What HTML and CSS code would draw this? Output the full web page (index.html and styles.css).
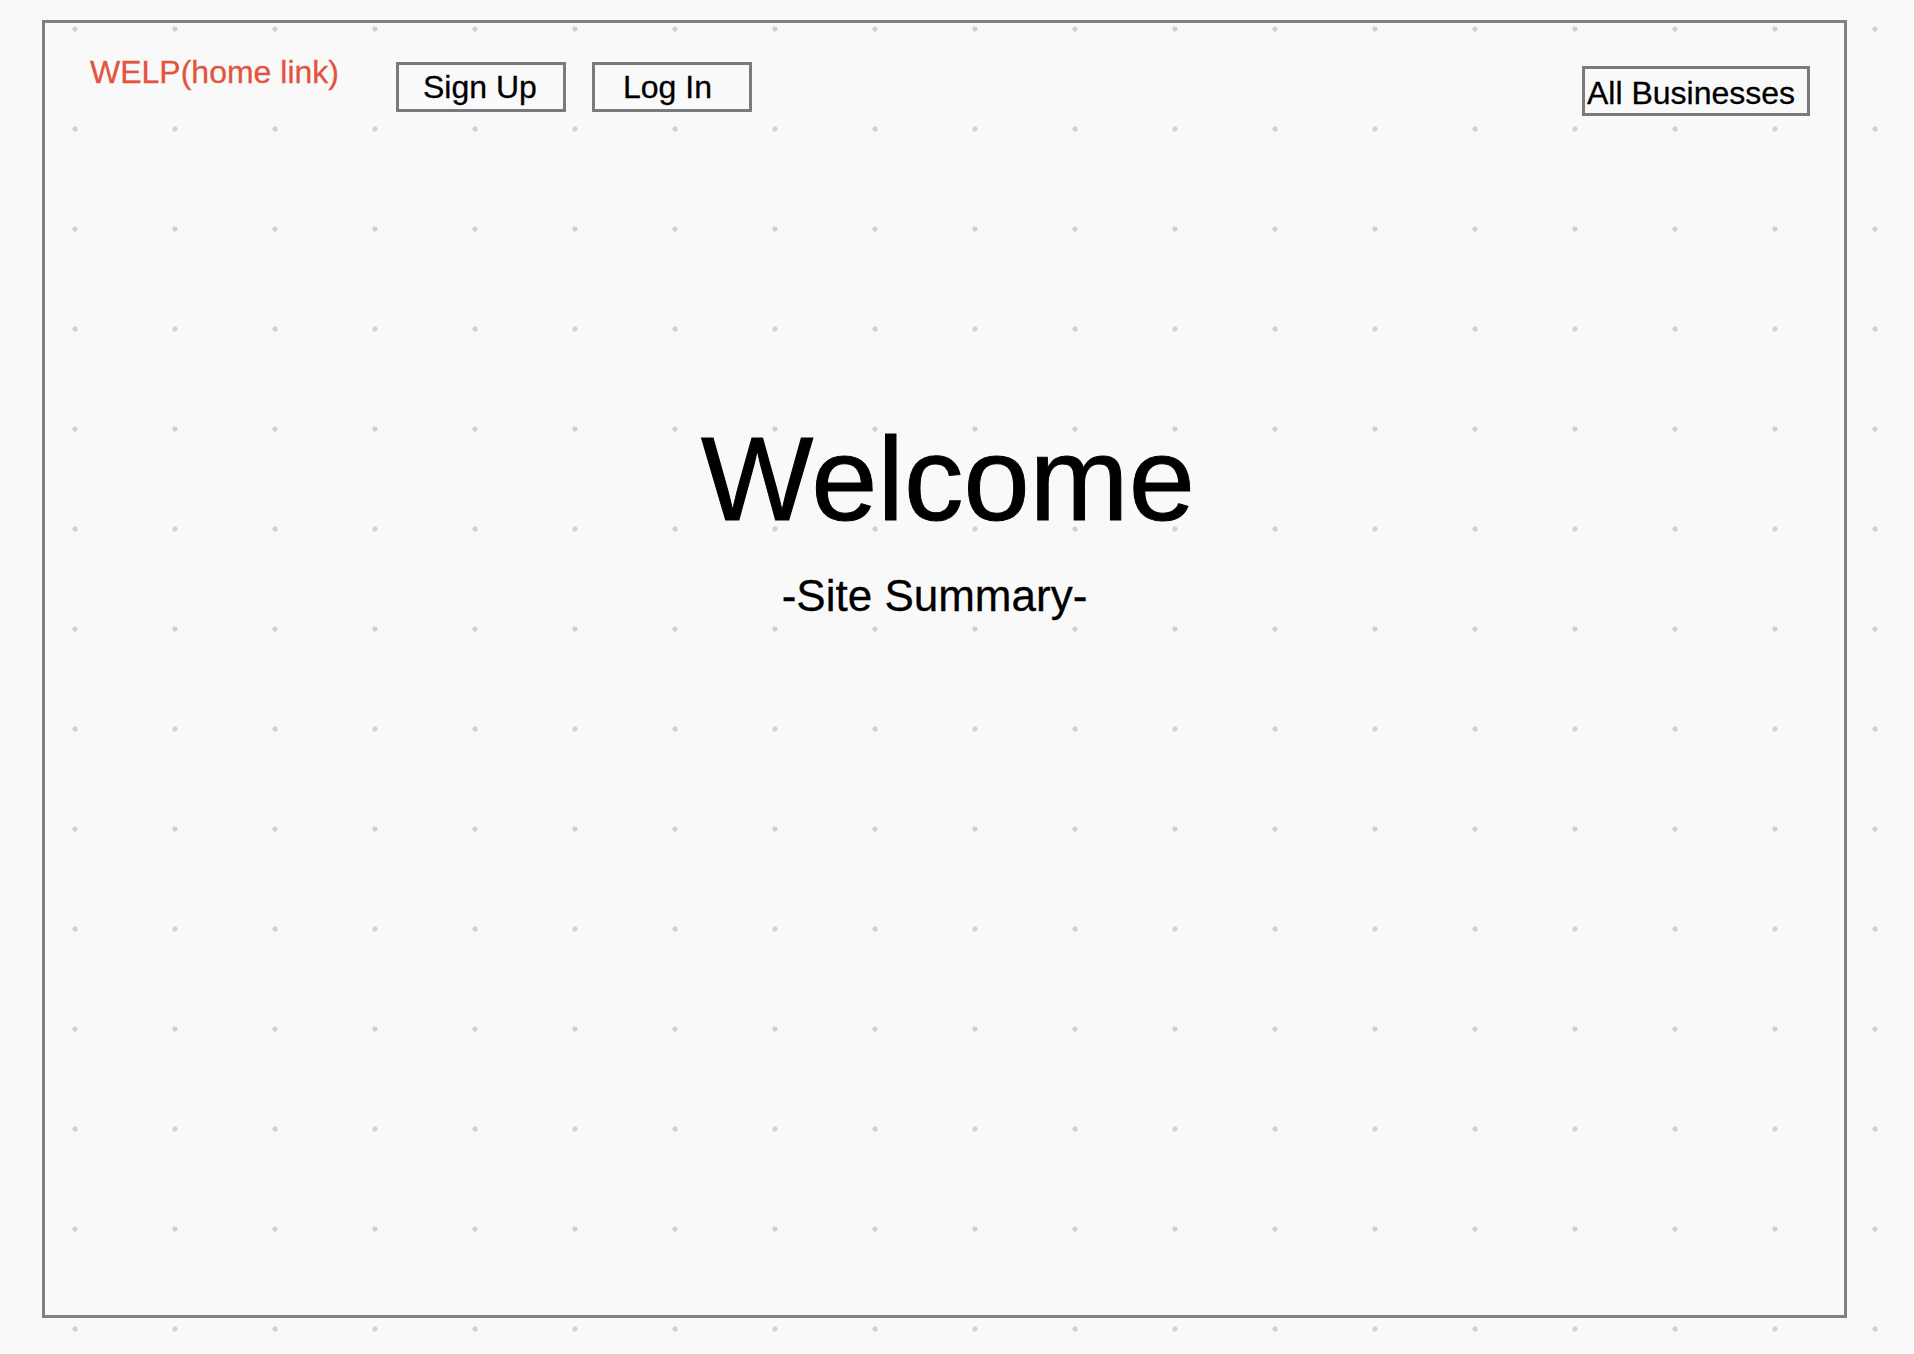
FILE: index.html
```html
<!DOCTYPE html>
<html lang="en">
<head>
<meta charset="utf-8">
<title>WELP</title>
<link rel="stylesheet" href="styles.css">
</head>
<body>
  <div class="frame">
    <header class="topbar">
      <a class="home-link" href="#">WELP(home link)</a>
      <button class="btn btn-signup">Sign Up</button>
      <button class="btn btn-login">Log In</button>
      <button class="btn btn-all">All Businesses</button>
    </header>
    <main class="hero">
      <h1 class="hero-title">Welcome</h1>
      <p class="hero-summary">-Site Summary-</p>
    </main>
  </div>
</body>
</html>
```

FILE: styles.css
```css
html {
  background-color: #f9f9f9;
  background-image: radial-gradient(circle at center, #d2d2d2 0, #d2d2d2 2.2px, rgba(210,210,210,0) 3px);
  background-size: 100px 100px;
  background-position: 25px 79px;
  min-height: 100%;
}

body {
  margin: 0;
  font-family: "Liberation Sans", Arial, Helvetica, sans-serif;
  color: #000;
}

.frame {
  box-sizing: border-box;
  width: 1805px;
  height: 1298px;
  margin: 20px 0 0 42px;
  border: 3px solid #808080;
}

.topbar {
  display: flex;
  align-items: flex-start;
  padding: 33px 34px 0 45px;
}

.home-link {
  font-size: 32px;
  line-height: 32px;
  color: #e4533e;
  text-decoration: none;
  -webkit-text-stroke: 0.3px #e4533e;
}

.btn {
  box-sizing: border-box;
  height: 50px;
  border: 3px solid #7a7a7a;
  background: transparent;
  font-family: "Liberation Sans", Arial, Helvetica, sans-serif;
  font-size: 32px;
  line-height: 42px;
  color: #000;
  padding: 1px 0 1px;
  text-align: left;
  border-radius: 0;
  -webkit-text-stroke: 0.3px #000;
}

.btn-signup {
  margin: 6px 0 0 57px;
  width: 170px;
  padding-left: 24px;
}

.btn-login {
  margin: 6px 0 0 26px;
  width: 160px;
  padding-left: 28px;
}

.btn-all {
  margin: 10px 0 0 auto;
  width: 228px;
  padding: 3px 0 0 2px;
}

.hero {
  margin-top: 303px;
  text-align: center;
}

.hero-title {
  margin: 0;
  padding-left: 7px;
  font-size: 119px;
  line-height: 119px;
  font-weight: normal;
  -webkit-text-stroke: 1px #000;
}

.hero-summary {
  margin: 36px 0 0;
  padding-right: 20px;
  font-size: 44px;
  line-height: 44px;
  -webkit-text-stroke: 0.3px #000;
}
```
